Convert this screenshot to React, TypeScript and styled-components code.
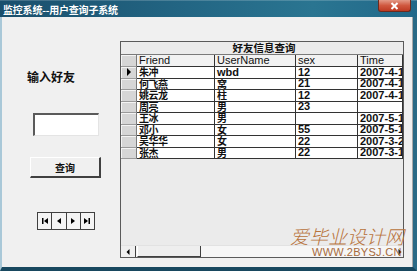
import React from 'react';
import styled, { createGlobalStyle } from 'styled-components';

const GlobalStyle = createGlobalStyle`
  html, body {
    margin: 0;
    padding: 0;
    background: #ffffff;
  }
  body {
    font-family: "Liberation Sans", "Noto Sans CJK SC", sans-serif;
  }
`;

const Window = styled.div`
  position: relative;
  width: 417px;
  height: 271px;
  display: flex;
  flex-direction: column;
  overflow: hidden;
  background: #1f5d7a;
`;

const TitleBar = styled.div`
  height: 17px;
  display: flex;
  align-items: flex-start;
  justify-content: space-between;
  padding-left: 3px;
  background: linear-gradient(
    to right,
    #1a4f6c 0%,
    #236684 45%,
    #2a7591 75%,
    #22698a 100%
  );
  box-shadow: inset 0 1px 0 rgba(255, 255, 255, 0.18);
`;

const TitleText = styled.span`
  font-family: "Noto Sans CJK SC", sans-serif;
  font-weight: 700;
  font-size: 10px;
  line-height: 19px;
  color: #ffffff;
  letter-spacing: -0.2px;
`;

const CloseButton = styled.div`
  width: 31px;
  height: 11px;
  margin-right: 6px;
  display: flex;
  align-items: center;
  justify-content: center;
  background: linear-gradient(to bottom, #e39a87 0%, #d0583f 50%, #bd3a22 100%);
  border: 1px solid #6e2a1e;
  border-top: none;
  border-radius: 0 0 3px 3px;
`;

const Frame = styled.div`
  flex: 1;
  display: flex;
  border-left: 2px solid #a9c8d8;
  border-right: 4px solid #2a6a86;
  border-bottom: 4px solid #18485f;
`;

const Content = styled.div`
  flex: 1;
  display: flex;
  background: #f0f0f0;
  border-right: 1px solid #a8a8a8;
`;

const LeftPanel = styled.div`
  width: 118px;
  display: flex;
  flex-direction: column;
  align-items: flex-start;
`;

const Label = styled.div`
  margin-top: 53px;
  margin-left: 25px;
  font-family: "Noto Sans CJK SC", sans-serif;
  font-weight: 700;
  font-size: 12px;
  line-height: 14px;
  color: #111111;
`;

const TextBox = styled.div`
  margin-top: 29px;
  margin-left: 31px;
  width: 66px;
  height: 23px;
  box-sizing: border-box;
  background: #ffffff;
  border-top: 2px solid #5a5a5a;
  border-left: 2px solid #5a5a5a;
  border-right: 1px solid #e4e4e4;
  border-bottom: 1px solid #e4e4e4;
`;

const Button = styled.div`
  margin-top: 21px;
  margin-left: 28px;
  width: 71px;
  height: 21px;
  box-sizing: border-box;
  display: flex;
  align-items: center;
  justify-content: center;
  background: #f0f0f0;
  border-top: 1px solid #ffffff;
  border-left: 1px solid #ffffff;
  border-right: 2px solid #404040;
  border-bottom: 2px solid #404040;
  font-family: "Noto Sans CJK SC", sans-serif;
  font-weight: 700;
  font-size: 10px;
  color: #111111;
`;

const Navigator = styled.div`
  margin-top: 34px;
  margin-left: 35px;
  width: 58px;
  height: 18px;
  display: flex;
  box-sizing: border-box;
  border: 1px solid #404040;
`;

const NavButton = styled.div`
  flex: 1;
  display: flex;
  align-items: center;
  justify-content: center;
  background: #f4f4f4;
  border-left: 1px solid #404040;
  &:first-child {
    border-left: none;
  }
`;

const GridPanel = styled.div`
  position: relative;
  margin-top: 24px;
  margin-bottom: 9px;
  width: 284px;
  box-sizing: border-box;
  display: flex;
  flex-direction: column;
  background: #ebebeb;
  border: 1px solid #5a5a5a;
`;

const Caption = styled.div`
  height: 12px;
  border-bottom: 1px solid #7a7a7a;
  display: flex;
  align-items: center;
  justify-content: center;
  font-family: "Noto Sans CJK SC", sans-serif;
  font-weight: 700;
  font-size: 10.5px;
  line-height: 1;
  color: #111111;
  padding-left: 4px;
`;

const Row = styled.div<{ $h: number }>`
  display: grid;
  grid-template-columns: 16px 78px 81px 62px 45px;
  height: ${(p) => p.$h}px;
`;

const Indicator = styled.div`
  box-sizing: border-box;
  display: flex;
  align-items: center;
  justify-content: center;
  background: #d6d6d6;
  border-right: 1px solid #7a7a7a;
  border-bottom: 1px solid #9a9a9a;
  box-shadow: inset 1px 1px 0 #f4f4f4;
`;

const Cell = styled.div<{ $head?: boolean }>`
  box-sizing: border-box;
  display: flex;
  align-items: center;
  overflow: hidden;
  white-space: nowrap;
  padding-left: 2px;
  background: ${(p) => (p.$head ? '#f2f2f2' : '#ffffff')};
  border-right: 1px solid #333333;
  border-bottom: 1px solid #333333;
  font-family: "Liberation Sans", "Noto Sans CJK SC", sans-serif;
  font-weight: ${(p) => (p.$head ? 400 : 700)};
  font-size: 11px;
  line-height: 1;
  color: #111111;
`;

const Zh = styled.span`
  display: block;
  font-family: "Noto Sans CJK SC", sans-serif;
  font-size: 10px;
  line-height: 1;
  letter-spacing: -0.5px;
`;

const Spacer = styled.div`
  flex: 1;
`;

const HScroll = styled.div`
  height: 11px;
  display: flex;
  background: #f6f6f6;
  border-top: 1px solid #e2e2e2;
`;

const ScrollArrow = styled.div<{ $w: number }>`
  width: ${(p) => p.$w}px;
  display: flex;
  align-items: center;
  justify-content: center;
  overflow: hidden;
  background: #efefef;
  border-right: 1px solid #404040;
`;

const Thumb = styled.div`
  width: 64px;
  margin-left: 1px;
  box-sizing: border-box;
  background: #eeeeee;
  border-left: 1px solid #ffffff;
  border-right: 1px solid #404040;
  border-bottom: 1px solid #404040;
`;

const Track = styled.div`
  flex: 1;
`;

const EndArrow = styled.div`
  width: 5px;
  display: flex;
  align-items: center;
  justify-content: flex-start;
  overflow: hidden;
  background: #efefef;
`;

const Watermark = styled.div`
  position: absolute;
  left: 290px;
  top: 225px;
  display: flex;
  flex-direction: column;
  align-items: flex-start;
  pointer-events: none;
`;

const WatermarkMain = styled.span`
  font-family: "Noto Sans CJK SC", sans-serif;
  font-weight: 300;
  font-size: 19px;
  line-height: 22px;
  color: #b8733c;
  font-style: italic;
`;

const WatermarkUrl = styled.span`
  margin-left: 22px;
  font-family: "Liberation Sans", sans-serif;
  font-size: 11px;
  line-height: 11px;
  letter-spacing: 0.3px;
  color: #a66a3c;
`;

const Tri = ({ dir, bar }: { dir: 'l' | 'r'; bar?: boolean }) => (
  <svg width="8" height="8" viewBox="0 0 8 8">
    {dir === 'l' ? (
      <>
        {bar && <rect x="1" y="1" width="1.5" height="6" fill="#000" />}
        <polygon points={bar ? '7,1 3,4 7,7' : '6,1 2,4 6,7'} fill="#000" />
      </>
    ) : (
      <>
        <polygon points={bar ? '1,1 5,4 1,7' : '2,1 6,4 2,7'} fill="#000" />
        {bar && <rect x="5.5" y="1" width="1.5" height="6" fill="#000" />}
      </>
    )}
  </svg>
);

type Friend = { name: string; user: string; userZh?: boolean; sex: string; time: string };

const friends: Friend[] = [
  { name: '朱冲', user: 'wbd', sex: '12', time: '2007-4-1' },
  { name: '何飞燕', user: '窝', userZh: true, sex: '21', time: '2007-4-1' },
  { name: '姚云龙', user: '柱', userZh: true, sex: '12', time: '2007-4-1' },
  { name: '周亮', user: '男', userZh: true, sex: '23', time: '' },
  { name: '王冰', user: '男', userZh: true, sex: '', time: '2007-5-1' },
  { name: '邓小', user: '女', userZh: true, sex: '55', time: '2007-5-1' },
  { name: '吴华华', user: '女', userZh: true, sex: '22', time: '2007-3-2' },
  { name: '张杰', user: '男', userZh: true, sex: '22', time: '2007-3-1' },
];

export default function App() {
  return (
    <>
      <GlobalStyle />
      <Window>
        <TitleBar>
          <TitleText>监控系统--用户查询子系统</TitleText>
          <CloseButton>
            <svg width="9" height="8" viewBox="0 0 9 8">
              <path d="M1.5 1 L7.5 7 M7.5 1 L1.5 7" stroke="#ffffff" strokeWidth="2" />
            </svg>
          </CloseButton>
        </TitleBar>
        <Frame>
          <Content>
            <LeftPanel>
              <Label>输入好友</Label>
              <TextBox />
              <Button>查询</Button>
              <Navigator>
                <NavButton>
                  <Tri dir="l" bar />
                </NavButton>
                <NavButton>
                  <Tri dir="l" />
                </NavButton>
                <NavButton>
                  <Tri dir="r" />
                </NavButton>
                <NavButton>
                  <Tri dir="r" bar />
                </NavButton>
              </Navigator>
            </LeftPanel>
            <GridPanel>
              <Caption>好友信息查询</Caption>
              <Row $h={12}>
                <Indicator />
                <Cell $head>Friend</Cell>
                <Cell $head>UserName</Cell>
                <Cell $head>sex</Cell>
                <Cell $head>Time</Cell>
              </Row>
              {friends.map((f, i) => (
                <Row $h={11.5} key={f.name}>
                  <Indicator>
                    {i === 0 && (
                      <svg width="6" height="8" viewBox="0 0 6 8">
                        <polygon points="1,0 5,4 1,8" fill="#000" />
                      </svg>
                    )}
                  </Indicator>
                  <Cell>
                    <Zh>{f.name}</Zh>
                  </Cell>
                  <Cell>{f.userZh ? <Zh>{f.user}</Zh> : f.user}</Cell>
                  <Cell>{f.sex}</Cell>
                  <Cell>{f.time}</Cell>
                </Row>
              ))}
              <Spacer />
              <HScroll>
                <ScrollArrow $w={14}>
                  <svg width="4" height="6" viewBox="0 0 4 6">
                    <polygon points="3.5,0 0.5,3 3.5,6" fill="#000" />
                  </svg>
                </ScrollArrow>
                <Thumb />
                <Track />
                <EndArrow>
                  <svg width="4" height="6" viewBox="0 0 4 6">
                    <polygon points="0.5,0 3.5,3 0.5,6" fill="#000" />
                  </svg>
                </EndArrow>
              </HScroll>
            </GridPanel>
          </Content>
        </Frame>
        <Watermark>
          <WatermarkMain>爱毕业设计网</WatermarkMain>
          <WatermarkUrl>WWW.2BYSJ.CN</WatermarkUrl>
        </Watermark>
      </Window>
    </>
  );
}
